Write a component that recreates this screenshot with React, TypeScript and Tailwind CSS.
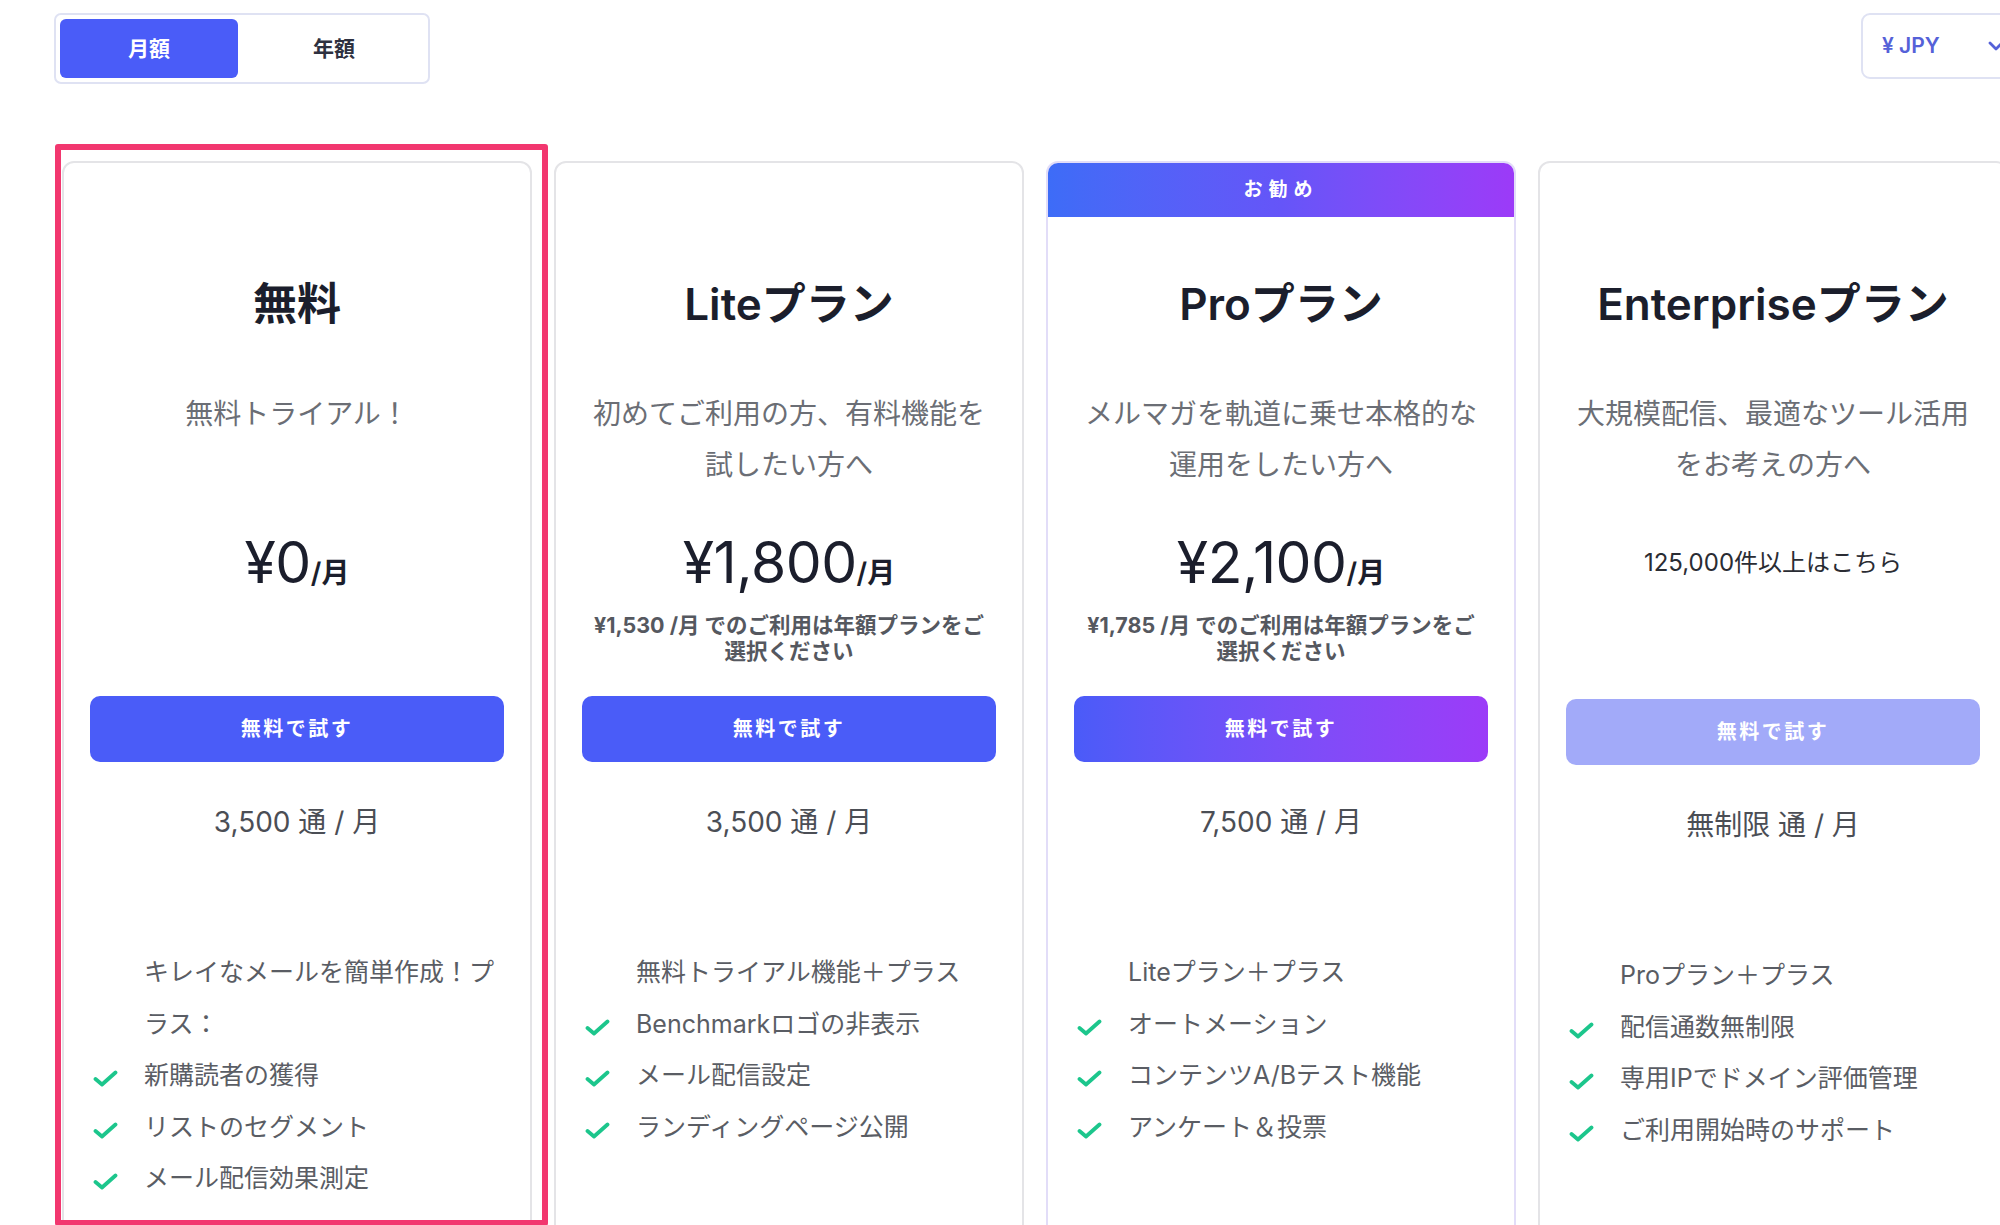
import { ReactNode } from 'react'

type Plan = {
  name: string
  desc: ReactNode
  price?: string
  note?: ReactNode
  contact?: string
  volume: string
  lead: ReactNode
  features: string[]
  featured?: boolean
  disabled?: boolean
}

const plans: Plan[] = [
  {
    name: '無料',
    desc: <>無料トライアル！</>,
    price: '¥0',
    volume: '3,500 通 / 月',
    lead: (
      <>
        キレイなメールを簡単作成！プ
        <br />
        ラス：
      </>
    ),
    features: ['新購読者の獲得', 'リストのセグメント', 'メール配信効果測定'],
  },
  {
    name: 'Liteプラン',
    desc: (
      <>
        初めてご利用の方、有料機能を
        <br />
        試したい方へ
      </>
    ),
    price: '¥1,800',
    note: (
      <>
        ¥1,530 /月 でのご利用は年額プランをご
        <br />
        選択ください
      </>
    ),
    volume: '3,500 通 / 月',
    lead: <>無料トライアル機能＋プラス</>,
    features: ['Benchmarkロゴの非表示', 'メール配信設定', 'ランディングページ公開'],
  },
  {
    name: 'Proプラン',
    desc: (
      <>
        メルマガを軌道に乗せ本格的な
        <br />
        運用をしたい方へ
      </>
    ),
    price: '¥2,100',
    note: (
      <>
        ¥1,785 /月 でのご利用は年額プランをご
        <br />
        選択ください
      </>
    ),
    volume: '7,500 通 / 月',
    lead: <>Liteプラン＋プラス</>,
    features: ['オートメーション', 'コンテンツA/Bテスト機能', 'アンケート＆投票'],
    featured: true,
  },
  {
    name: 'Enterpriseプラン',
    desc: (
      <>
        大規模配信、最適なツール活用
        <br />
        をお考えの方へ
      </>
    ),
    contact: '125,000件以上はこちら',
    volume: '無制限 通 / 月',
    lead: <>Proプラン＋プラス</>,
    features: ['配信通数無制限', '専用IPでドメイン評価管理', 'ご利用開始時のサポート'],
    disabled: true,
  },
]

function Check() {
  return (
    <svg width="25" height="19" viewBox="0 0 25 19" fill="none" className="mt-[19px] shrink-0">
      <path d="M2.5 10 L9 15.5 L22.5 3.5" stroke="#1cc68c" strokeWidth="3.8" strokeLinecap="round" strokeLinejoin="round" />
    </svg>
  )
}

function PlanCard({ plan }: { plan: Plan }) {
  return (
    <div
      className={`h-[1100px] w-[470px] shrink-0 overflow-hidden rounded-[12px] border-2 bg-white ${
        plan.featured ? 'border-[#e2ddf8]' : 'border-[#e4e4e7]'
      }`}
    >
      {plan.featured ? (
        <div className="flex h-[54px] items-center justify-center bg-linear-to-r from-[#3d6cf7] via-[#6555f8] to-[#9c3af8] text-[19px] font-bold tracking-[6px] text-white">
          お勧め
        </div>
      ) : (
        <div className="h-[54px]" />
      )}

      <h2 className="mt-[57px] h-[60px] text-center text-[44px] leading-[60px] font-semibold whitespace-nowrap text-[#1b1e2c]">
        {plan.name}
      </h2>

      <p className="mt-[55px] h-[102px] text-center text-[28px] leading-[51px] whitespace-nowrap text-[#6b6e75]">
        {plan.desc}
      </p>

      {plan.contact ? (
        <div className="mt-[37px] h-[139px] text-center">
          <div className="h-[70px] text-[24px] leading-[70px] text-[#2a2c33]">{plan.contact}</div>
        </div>
      ) : (
        <div className="mt-[37px] h-[136px] text-center">
          <div className="h-[70px] leading-[70px] text-[#1b1e2c]">
            <span className="text-[57px] tracking-[-0.5px]">{plan.price}</span>
            <span className="text-[28px] font-semibold">/月</span>
          </div>
          {plan.note && (
            <p className="mt-[14px] text-[21.5px] leading-[26px] font-bold whitespace-nowrap text-[#55585f]">
              {plan.note}
            </p>
          )}
        </div>
      )}

      <div className="mx-[26px] mt-[32px]">
        <button
          className={`h-[66px] w-full rounded-[10px] text-[20px] font-bold tracking-[2.5px] text-white ${
            plan.featured
              ? 'bg-linear-to-r from-[#4a5bf8] to-[#9c3bf8]'
              : plan.disabled
                ? 'bg-[#a2aaf9]'
                : 'bg-[#4a5cf8]'
          }`}
        >
          無料で試す
        </button>
      </div>

      <div className="mt-[40px] h-[40px] text-center text-[28px] leading-[40px] text-[#4b4e55]">{plan.volume}</div>

      <div className="mt-[105px] text-[25px] leading-[51.5px] text-[#5a5d64]">
        <div className="pl-[80px] whitespace-nowrap">{plan.lead}</div>
        {plan.features.map((f) => (
          <div key={f} className="flex pl-[29px]">
            <div className="w-[51px] shrink-0">
              <Check />
            </div>
            <span className="whitespace-nowrap">{f}</span>
          </div>
        ))}
      </div>
    </div>
  )
}

export default function App() {
  return (
    <div className="relative h-[1225px] w-[2000px] overflow-hidden bg-white font-[family-name:Inter,'Noto_Sans_CJK_JP',sans-serif]">
      {/* top controls */}
      <div className="flex items-start pt-[13px] pl-[54px]">
        <div className="flex h-[71px] w-[376px] rounded-[7px] border-2 border-[#dfe2f3] bg-white p-[4px]">
          <button className="h-full w-[178px] rounded-[6px] bg-[#4a5cf8] text-[21px] font-bold text-white">月額</button>
          <button className="h-full flex-1 pl-[6px] text-[21px] font-bold text-[#2e3140]">年額</button>
        </div>
        <div className="mr-[-20px] ml-auto flex h-[66px] w-[159px] items-center rounded-[9px] border-2 border-[#dfe2f3] pl-[19px]">
          <span className="text-[21px] font-semibold text-[#5561d8]">¥ JPY</span>
          <svg width="16" height="10" viewBox="0 0 16 10" fill="none" className="mr-[14px] ml-auto">
            <path d="M2 2 L8 8 L14 2" stroke="#5561d8" strokeWidth="2.8" strokeLinecap="round" strokeLinejoin="round" />
          </svg>
        </div>
      </div>

      {/* plan cards */}
      <div className="mt-[77px] flex gap-[22px] pl-[62px]">
        {plans.map((p) => (
          <PlanCard key={p.name} plan={p} />
        ))}
      </div>

      {/* highlight around the free plan */}
      <div className="pointer-events-none absolute top-[144px] left-[55px] h-[1082px] w-[493px] rounded-[3px] border-[6px] border-[#f2376f]" />
    </div>
  )
}
